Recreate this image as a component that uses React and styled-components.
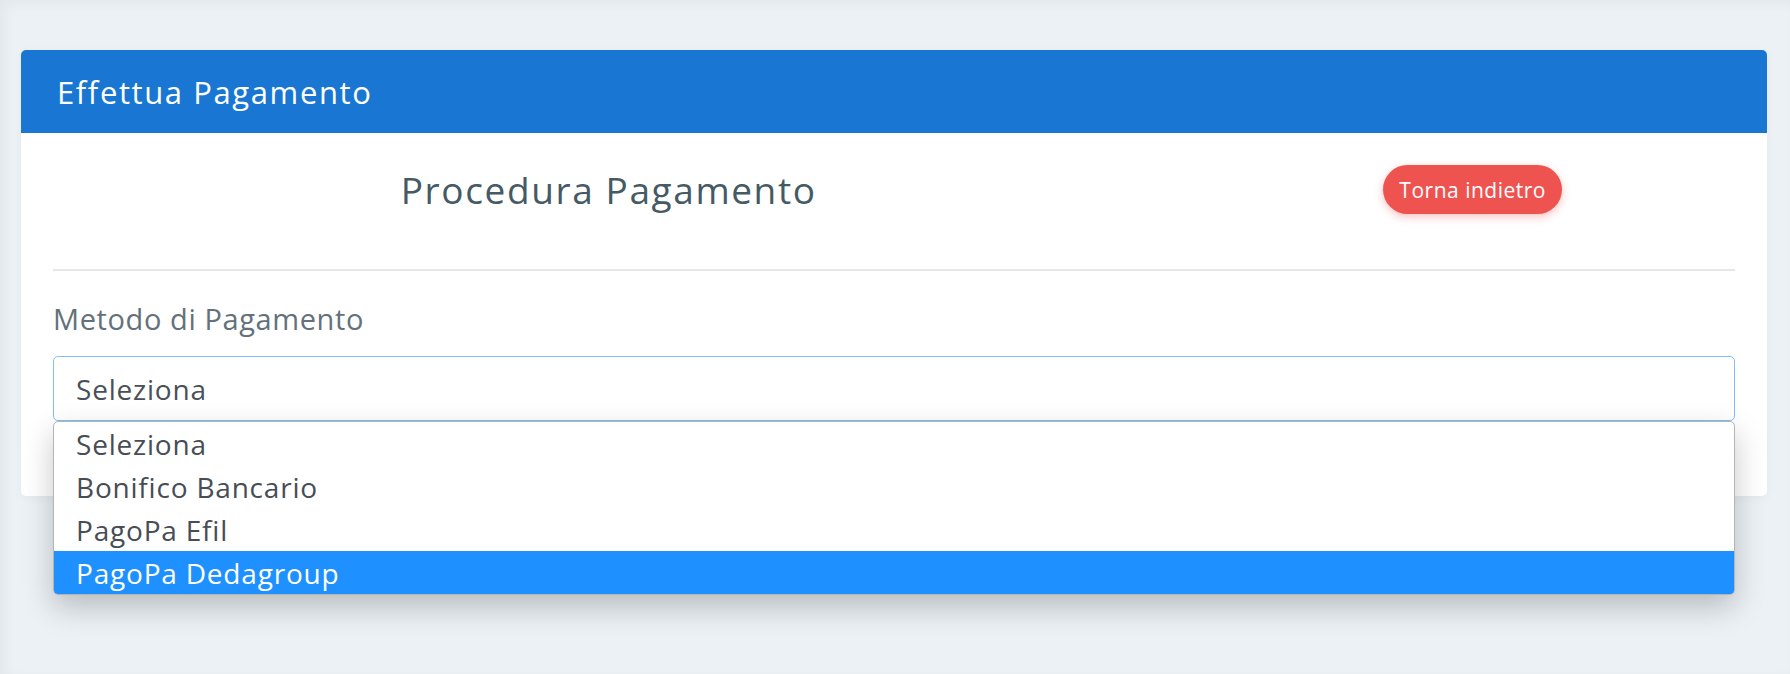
import React from "react";
import styled, { createGlobalStyle } from "styled-components";

const GlobalStyle = createGlobalStyle`
  body {
    margin: 0;
    background: #ebf1f5;
    font-family: "Open Sans", "Liberation Sans", sans-serif;
  }
`;

const Page = styled.div`
  min-height: 674px;
  padding: 50px 23px 0 21px;
  box-sizing: border-box;
  background: #ebf1f5;
  box-shadow: inset 6px 4px 12px rgba(0, 0, 0, 0.04);
`;

const Card = styled.div`
  background: #fff;
  border-radius: 5px;
  box-shadow: 0 2px 10px rgba(0, 0, 0, 0.04);
`;

const CardHeader = styled.div`
  background: #1976d2;
  border-radius: 5px 5px 0 0;
  height: 83px;
  display: flex;
  align-items: center;
  padding: 0 36px;
  color: #fff;
  font-size: 31px;
  letter-spacing: 1.6px;
`;

const CardBody = styled.div`
  padding: 31px 32px 32px;
`;

const TitleRow = styled.div`
  display: grid;
  grid-template-columns: 8fr 4fr;
  align-items: center;
  margin: 0 -15px;
  height: 49px;
`;

const Title = styled.h2`
  margin: 0;
  text-align: center;
  font-weight: 400;
  font-size: 37px;
  letter-spacing: 1.6px;
  color: #455a64;
`;

const ButtonCell = styled.div`
  display: flex;
  justify-content: center;
  padding-left: 16px;
`;

const BackButton = styled.button`
  font-family: inherit;
  font-size: 21px;
  letter-spacing: 0.5px;
  color: #fff;
  background: #ef5350;
  border: none;
  border-radius: 25px;
  height: 49px;
  padding: 0 16px;
  box-shadow: 0 3px 8px rgba(239, 83, 80, 0.35);
  cursor: pointer;
`;

const Divider = styled.hr`
  border: none;
  border-top: 2px solid #e6e6e6;
  margin: 56px 0 27px;
`;

const FormGroup = styled.div`
  margin-bottom: 43px;
`;

const Label = styled.label`
  display: block;
  font-size: 29px;
  letter-spacing: 0.6px;
  line-height: 42px;
  color: #64717b;
  margin-bottom: 16px;
`;

const SelectWrap = styled.div`
  position: relative;
`;

const SelectBox = styled.div`
  height: 65px;
  box-sizing: border-box;
  border: 1px solid #80bdff;
  border-radius: 5px;
  padding: 0 22px;
  display: flex;
  align-items: center;
  font-size: 28px;
  letter-spacing: 0.8px;
  color: #495057;
`;

const Dropdown = styled.ul`
  position: absolute;
  left: 0;
  right: 0;
  top: 100%;
  margin: 0;
  padding: 0;
  list-style: none;
  background: #fff;
  border: 1px solid #b4b4b4;
  border-radius: 5px;
  overflow: hidden;
  box-shadow: 0 12px 30px rgba(0, 0, 0, 0.22);
  z-index: 5;
`;

const Option = styled.li`
  height: 43px;
  display: flex;
  align-items: center;
  padding: 0 22px;
  font-size: 28px;
  letter-spacing: 0.8px;
  color: ${p => (p.$active ? "#fff" : "#474d55")};
  background: ${p => (p.$active ? "#1e90ff" : "transparent")};
`;

const options = ["Seleziona", "Bonifico Bancario", "PagoPa Efil", "PagoPa Dedagroup"];

export default function App() {
  return (
    <>
      <GlobalStyle />
      <Page>
        <Card>
          <CardHeader>Effettua Pagamento</CardHeader>
          <CardBody>
            <TitleRow>
              <Title>Procedura Pagamento</Title>
              <ButtonCell>
                <BackButton>Torna indietro</BackButton>
              </ButtonCell>
            </TitleRow>
            <Divider />
            <FormGroup>
              <Label>Metodo di Pagamento</Label>
              <SelectWrap>
                <SelectBox>Seleziona</SelectBox>
                <Dropdown>
                  {options.map(o => (
                    <Option key={o} $active={o === "PagoPa Dedagroup"}>
                      {o}
                    </Option>
                  ))}
                </Dropdown>
              </SelectWrap>
            </FormGroup>
          </CardBody>
        </Card>
      </Page>
    </>
  );
}
